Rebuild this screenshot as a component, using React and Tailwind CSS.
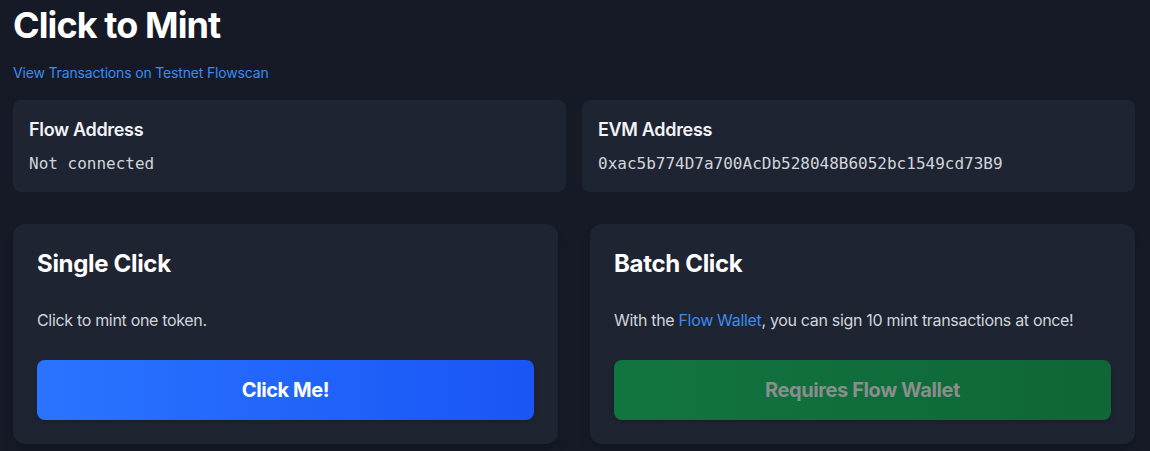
export default function App() {
  return (
    <div className="min-h-[451px] w-full bg-[#151a26] text-white font-['Inter',sans-serif] tracking-[-0.02em] pl-[13px] pr-[15px] pt-[5px] pb-2">
      <h1 className="text-4xl leading-10 font-bold text-white tracking-[-0.025em]">Click to Mint</h1>
      <a href="#" className="mt-[18px] block text-sm leading-5 text-[#3b8bf0] tracking-[-0.012em]">View Transactions on Testnet Flowscan</a>
      <div className="mt-[17px] grid grid-cols-2 gap-4">
        <div className="rounded-lg bg-[#1f2432] p-4">
          <h3 className="text-lg leading-7 font-semibold text-[#f3f4f6]">Flow Address</h3>
          <p className="mt-2 text-base leading-6 text-[#d1d5db] tracking-normal font-['DejaVu_Sans_Mono',monospace]">Not connected</p>
        </div>
        <div className="rounded-lg bg-[#1f2432] p-4">
          <h3 className="text-lg leading-7 font-semibold text-[#f3f4f6]">EVM Address</h3>
          <p className="mt-2 text-base leading-6 text-[#d1d5db] tracking-normal font-['DejaVu_Sans_Mono',monospace]">0xac5b774D7a700AcDb528048B6052bc1549cd73B9</p>
        </div>
      </div>
      <div className="mt-8 grid grid-cols-2 gap-8">
        <div className="rounded-xl bg-[#1f2432] p-6 shadow-lg">
          <h2 className="text-2xl leading-8 font-bold text-white">Single Click</h2>
          <p className="mt-7 text-base leading-6 text-[#d1d5db]">Click to mint one token.</p>
          <button className="mt-7 w-full rounded-lg bg-gradient-to-r from-[#2a74ff] to-[#1a55f5] py-4 text-xl leading-7 font-bold text-white shadow-md tracking-[-0.02em]">Click Me!</button>
        </div>
        <div className="rounded-xl bg-[#1f2432] p-6 shadow-lg">
          <h2 className="text-2xl leading-8 font-bold text-white">Batch Click</h2>
          <p className="mt-7 text-base leading-6 text-[#d1d5db]">
            With the <a href="#" className="text-[#3b8bf0]">Flow Wallet</a>, you can sign 10 mint transactions at once!
          </p>
          <button disabled className="mt-7 w-full rounded-lg bg-gradient-to-r from-[#127540] to-[#0f6637] py-4 text-xl leading-7 font-bold text-[#8a8e8c] shadow-md tracking-[-0.02em]">Requires Flow Wallet</button>
        </div>
      </div>
    </div>
  );
}
